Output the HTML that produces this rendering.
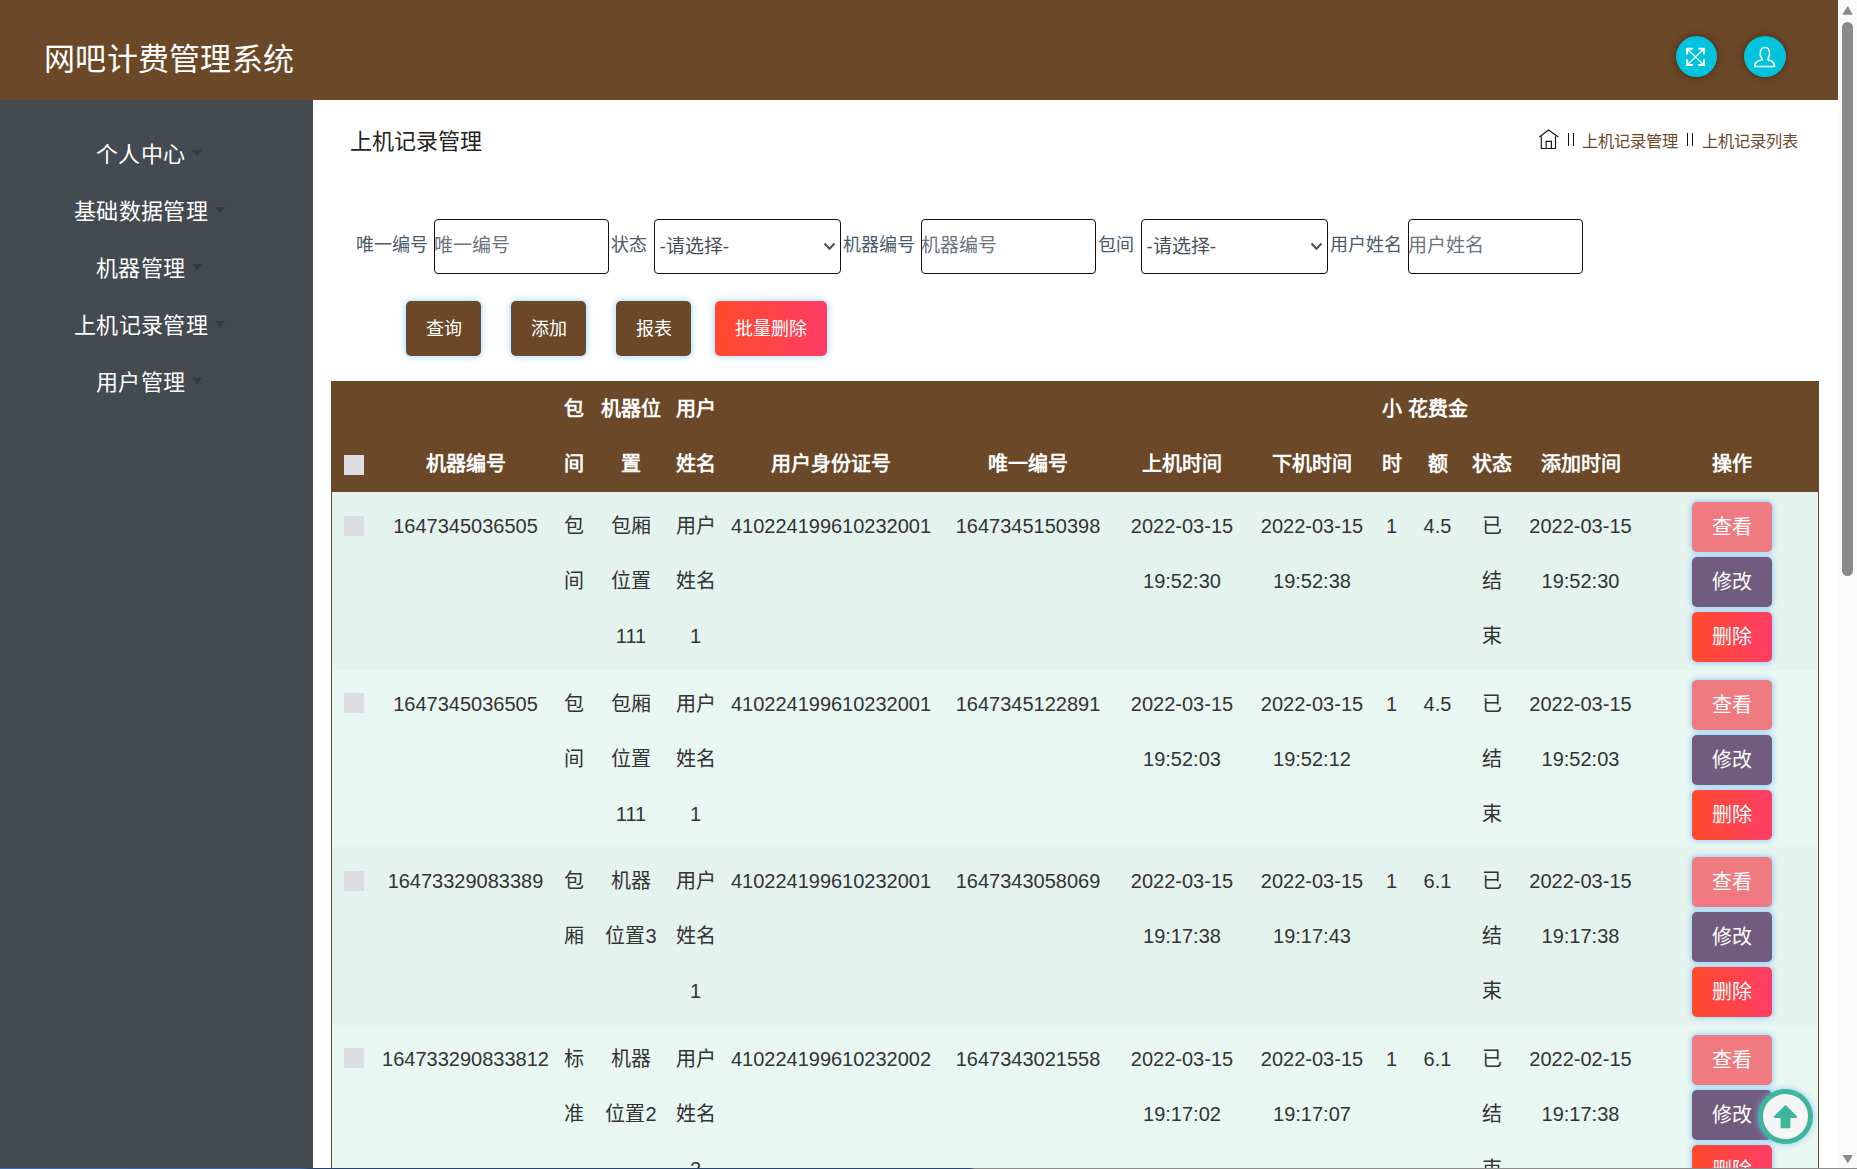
<!DOCTYPE html>
<html lang="zh-CN">
<head>
<meta charset="utf-8">
<title>网吧计费管理系统</title>
<style>
*{box-sizing:border-box;margin:0;padding:0}
html,body{width:1857px;height:1169px;overflow:hidden;background:#fff}
body{font-family:"Liberation Sans",sans-serif;color:#333;position:relative}
.abs{position:absolute}
#hdr{left:0;top:0;width:1838px;height:100px;background:#6b4828}
#title{left:44px;top:38px;font-size:31px;letter-spacing:.3px;line-height:44px;color:#fff;white-space:nowrap}
.circ{width:41px;height:41px;border-radius:50%;background:#00c3dd;box-shadow:0 0 6px rgba(40,20,0,.6)}
#side{left:0;top:100px;width:313px;height:1069px;background:#434a50}
.nav{color:#fff;font-size:22px;letter-spacing:.35px;line-height:30px;white-space:nowrap}
.caret{display:inline-block;width:0;height:0;border-left:5.5px solid transparent;border-right:5.5px solid transparent;border-top:6px solid #343a40;vertical-align:middle;margin-left:6.5px;position:relative;top:-3px}
#ptitle{left:350px;top:127px;font-size:22px;line-height:30px;color:#222;white-space:nowrap}
.bct{top:129px;white-space:nowrap;font-size:16.2px;line-height:24px;color:#6b4828}
.lbl{top:232px;font-size:18px;line-height:26px;color:#495a6a;white-space:nowrap}
.inp{top:219px;height:55px;border:1.2px solid #111;border-radius:4px;background:#fff;font-size:19px;line-height:26px;color:#6c757d;padding:13px 0 0 0;text-indent:-1.3px;white-space:nowrap}
.sel{top:219px;height:55px;border:1.2px solid #111;border-radius:4px;background:#fff;font-size:19px;line-height:26px;color:#495057;padding:14px 0 0 4.5px;white-space:nowrap}
.sel svg{position:absolute;right:4px;top:22px}
.btn{top:301px;height:55px;width:75px;border-radius:5px;background:#6b4828;color:#fff;font-size:18px;line-height:55px;padding-top:1px;text-align:center;box-shadow:0 0 6px 1px rgba(140,200,250,.75);white-space:nowrap}
.grad{background:linear-gradient(90deg,#ff4a2a,#ff3d66)}
#tbl{left:331px;top:381px;width:1488px;border-left:1px solid #6b4828;border-right:1px solid #6b4828}
table{border-collapse:collapse;table-layout:fixed;width:1486px}
th{background:#6b4828;color:#fff;font-weight:bold;font-size:20px;line-height:55px;text-align:center;vertical-align:bottom;padding:0;white-space:nowrap}
td{font-size:20px;line-height:55px;text-align:center;vertical-align:top;padding:7px 0 0 0;white-space:nowrap;color:#333}
tr.r1 td{background:#e4f3ee}
tr.r2 td{background:#e8f7f1}
.cb{display:inline-block;width:20px;height:20px;background:#dcdde3;vertical-align:middle;position:relative;top:-2px}
th .cb{top:-1px}
.ab{display:block;margin:0 auto;width:80px;height:50px;border-radius:5px;color:#fff;font-size:20px;line-height:50px;text-align:center;box-shadow:0 0 5px 1px rgba(140,200,250,.9)}
.ab+.ab{margin-top:5px}
td.ops{padding-top:10px}
.v{background:#ef7a80}.e{background:#715c80}.d{background:linear-gradient(90deg,#ff4a2a,#ff3d66)}
#sb{left:1838px;top:0;width:19px;height:1169px;background:#fafafa}
</style>
</head>
<body>
<div id="hdr" class="abs"></div>
<div id="title" class="abs">网吧计费管理系统</div>
<div class="abs circ" style="left:1676px;top:36px"></div>
<div class="abs circ" style="left:1744px;top:36px;width:42px;height:41px"></div>
<svg class="abs" style="left:1684px;top:46px" width="24" height="23" viewBox="0 0 24 23"><g fill="none" stroke="#fff"><path d="M3.6 3.3 L19.5 18.6 M19.5 3.3 L3.6 18.6" stroke-width="1.3"/><path d="M3.1 8.6 V2.85 H8.9 M14.4 2.85 H20 V8.6 M3.1 13.6 V19 H8.9 M14.4 19 H20 V13.6" stroke-width="2"/></g></svg>
<svg class="abs" style="left:1752px;top:45px" width="26" height="24" viewBox="0 0 26 24"><path d="M10.3 14.8 C10.3 13.6 9.2 12.6 8.7 11 C8 10.6 7.9 9.3 8.4 8.7 C8 4.6 9.8 2.4 12.9 2.4 C16 2.4 17.8 4.6 17.4 8.7 C17.9 9.3 17.8 10.6 17.1 11 C16.6 12.6 15.5 13.6 15.5 14.8 C19.6 15.4 22.5 17.8 22.5 21.5 L2.6 21.5 C2.6 17.8 5.8 15.4 10.3 14.8 Z" fill="none" stroke="#fff" stroke-width="1.5"/></svg>

<div id="side" class="abs"></div>
<div class="abs nav" style="left:96px;top:140px">个人中心<span class="caret"></span></div>
<div class="abs nav" style="left:74px;top:197px">基础数据管理<span class="caret"></span></div>
<div class="abs nav" style="left:96px;top:254px">机器管理<span class="caret"></span></div>
<div class="abs nav" style="left:74px;top:311px">上机记录管理<span class="caret"></span></div>
<div class="abs nav" style="left:96px;top:368px">用户管理<span class="caret"></span></div>

<div id="ptitle" class="abs">上机记录管理</div>
<svg class="abs" style="left:1537px;top:128px" width="24" height="23" viewBox="0 0 24 23"><g fill="none" stroke="#1a1a1a" stroke-width="1.2"><path d="M2.3 9 L11.6 2 L21.3 9"/><path d="M4.3 8.2 V20.5 H18.5 V8.2"/><path d="M9.1 20.5 V13.4 H14.4 V20.5"/></g></svg>
<div class="abs" style="left:1567.7px;top:133px;width:1.6px;height:12.7px;background:#111"></div>
<div class="abs" style="left:1572.7px;top:133px;width:1.6px;height:12.7px;background:#111"></div>
<div class="abs bct" style="left:1582px">上机记录管理</div>
<div class="abs" style="left:1686.5px;top:133px;width:1.6px;height:12.7px;background:#111"></div>
<div class="abs" style="left:1691.5px;top:133px;width:1.6px;height:12.7px;background:#111"></div>
<div class="abs bct" style="left:1702px">上机记录列表</div>


<div class="abs lbl" style="left:356px">唯一编号</div>
<div class="abs inp" style="left:434px;width:175px">唯一编号</div>
<div class="abs lbl" style="left:611px">状态</div>
<div class="abs sel" style="left:654px;width:187px">-请选择-<svg width="13" height="9" viewBox="0 0 13 9"><path d="M1.5 1.5 L6.5 6.8 L11.5 1.5" fill="none" stroke="#495057" stroke-width="2"/></svg></div>
<div class="abs lbl" style="left:843px">机器编号</div>
<div class="abs inp" style="left:921px;width:175px">机器编号</div>
<div class="abs lbl" style="left:1098px">包间</div>
<div class="abs sel" style="left:1141px;width:187px">-请选择-<svg width="13" height="9" viewBox="0 0 13 9"><path d="M1.5 1.5 L6.5 6.8 L11.5 1.5" fill="none" stroke="#495057" stroke-width="2"/></svg></div>
<div class="abs lbl" style="left:1330px">用户姓名</div>
<div class="abs inp" style="left:1408px;width:175px">用户姓名</div>

<div class="abs btn" style="left:406px">查询</div>
<div class="abs btn" style="left:511px">添加</div>
<div class="abs btn" style="left:616px">报表</div>
<div class="abs btn grad" style="left:715px;width:112px">批量删除</div>

<div id="tbl" class="abs">
<table>
<colgroup><col style="width:44px"><col style="width:179px"><col style="width:38px"><col style="width:76px"><col style="width:53px"><col style="width:218px"><col style="width:176px"><col style="width:132px"><col style="width:128px"><col style="width:31px"><col style="width:61px"><col style="width:48px"><col style="width:129px"><col style="width:173px"></colgroup>
<thead><tr style="height:111px">
<th><span class="cb"></span></th><th>机器编号</th><th>包<br>间</th><th>机器位<br>置</th><th>用户<br>姓名</th><th>用户身份证号</th><th>唯一编号</th><th>上机时间</th><th>下机时间</th><th>小<br>时</th><th>花费金<br>额</th><th>状态</th><th>添加时间</th><th>操作</th>
</tr></thead>
<tbody>
<tr class="r1" style="height:177.6px"><td><span class="cb"></span></td><td>1647345036505</td><td>包<br>间</td><td>包厢<br>位置<br>111</td><td>用户<br>姓名<br>1</td><td>410224199610232001</td><td>1647345150398</td><td>2022-03-15<br>19:52:30</td><td>2022-03-15<br>19:52:38</td><td>1</td><td>4.5</td><td>已<br>结<br>束</td><td>2022-03-15<br>19:52:30</td><td class="ops"><span class="ab v">查看</span><span class="ab e">修改</span><span class="ab d">删除</span></td></tr>
<tr class="r2" style="height:177.4px"><td><span class="cb"></span></td><td>1647345036505</td><td>包<br>间</td><td>包厢<br>位置<br>111</td><td>用户<br>姓名<br>1</td><td>410224199610232001</td><td>1647345122891</td><td>2022-03-15<br>19:52:03</td><td>2022-03-15<br>19:52:12</td><td>1</td><td>4.5</td><td>已<br>结<br>束</td><td>2022-03-15<br>19:52:03</td><td class="ops"><span class="ab v">查看</span><span class="ab e">修改</span><span class="ab d">删除</span></td></tr>
<tr class="r1" style="height:177.6px"><td><span class="cb"></span></td><td>16473329083389</td><td>包<br>厢</td><td>机器<br>位置3</td><td>用户<br>姓名<br>1</td><td>410224199610232001</td><td>1647343058069</td><td>2022-03-15<br>19:17:38</td><td>2022-03-15<br>19:17:43</td><td>1</td><td>6.1</td><td>已<br>结<br>束</td><td>2022-03-15<br>19:17:38</td><td class="ops"><span class="ab v">查看</span><span class="ab e">修改</span><span class="ab d">删除</span></td></tr>
<tr class="r2" style="height:177.4px"><td><span class="cb"></span></td><td>164733290833812</td><td>标<br>准</td><td>机器<br>位置2</td><td>用户<br>姓名<br>2</td><td>410224199610232002</td><td>1647343021558</td><td>2022-03-15<br>19:17:02</td><td>2022-03-15<br>19:17:07</td><td>1</td><td>6.1</td><td>已<br>结<br>束</td><td>2022-02-15<br>19:17:38</td><td class="ops"><span class="ab v">查看</span><span class="ab e">修改</span><span class="ab d">删除</span></td></tr>
</tbody>
</table>
</div>

<div class="abs" style="left:1758px;top:1089px;width:55px;height:55px;border-radius:50%;border:5.2px solid #3fb59d;background:#f5f5f5;box-shadow:0 0 6px rgba(120,190,255,.8)"></div>
<svg class="abs" style="left:1772px;top:1103px" width="27" height="27" viewBox="0 0 27 27"><path d="M13.5 1.8 L25 13.2 Q25.5 14.6 24 15 L18.4 15 L18.4 24.5 Q18.4 25.2 17.7 25.2 L9.3 25.2 Q8.6 25.2 8.6 24.5 L8.6 15 L3 15 Q1.5 14.6 2 13.2 Z" fill="#3fb59d"/></svg>
<div id="sb" class="abs"></div>
<svg class="abs" style="left:1838px;top:0" width="19" height="1169" viewBox="0 0 19 1169"><path d="M4.3 14.8 L9.8 6 L14.9 14.8 Z" fill="#8a8a8a"/><rect x="4" y="22" width="11" height="554" rx="5.5" fill="#8a8a8a"/><path d="M4.5 1155 L14.8 1155 L9.8 1163.5 Z" fill="#8a8a8a"/></svg>
<div class="abs" style="left:0;top:1168px;width:1857px;height:1px;background:linear-gradient(90deg,#3d6db0 0,#3a64a4 300px,#27406e 310px,#2b4575 970px,#8d8d8d 975px,#8d8d8d 100%)"></div>
</body>
</html>
